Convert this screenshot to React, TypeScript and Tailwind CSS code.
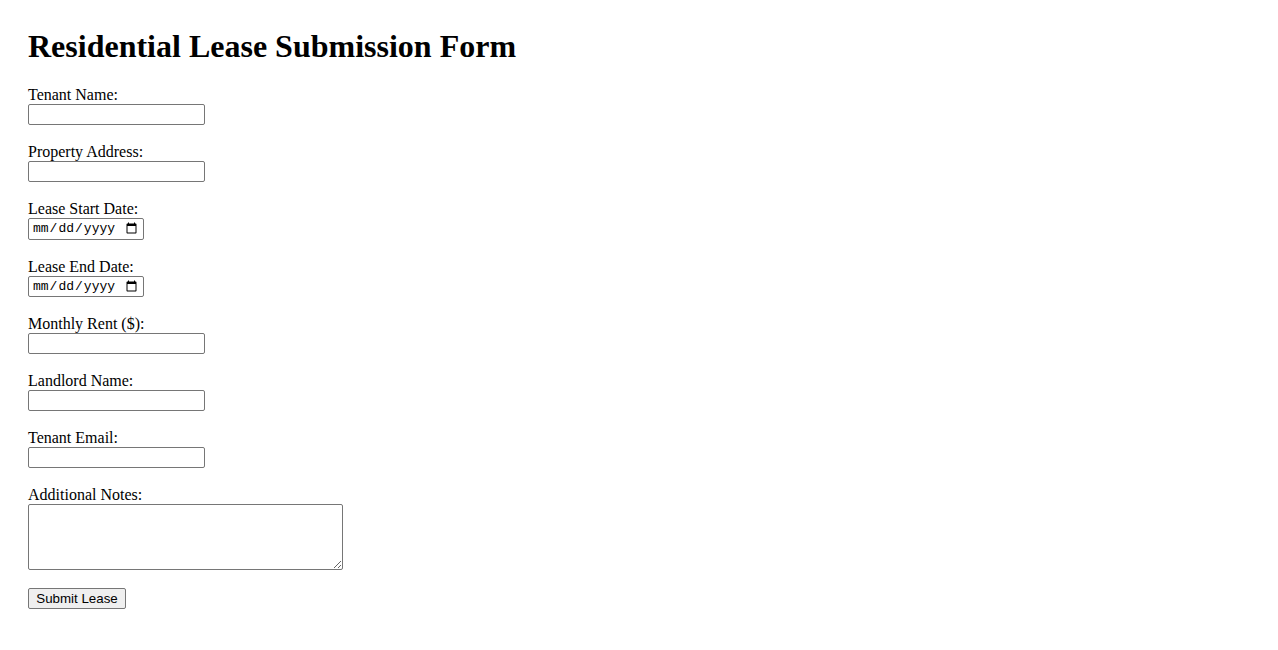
const fields = [
  { label: "Tenant Name:", type: "text" },
  { label: "Property Address:", type: "text" },
  { label: "Lease Start Date:", type: "date" },
  { label: "Lease End Date:", type: "date" },
  { label: "Monthly Rent ($):", type: "number" },
  { label: "Landlord Name:", type: "text" },
  { label: "Tenant Email:", type: "email" },
];

export default function App() {
  return (
    <div className="min-h-screen bg-white px-[28px] pt-[28px] text-black font-['Liberation_Serif',serif] text-[16px] leading-normal">
      <h1 className="text-[32px] font-bold leading-[37px] mb-[21px]">Residential Lease Submission Form</h1>
      <form className="flex flex-col items-start" onSubmit={(e) => e.preventDefault()}>
        {fields.map((f) => (
          <div key={f.label} className="flex flex-col items-start mb-[18px]">
            <label className="leading-[18px]">{f.label}</label>
            {f.type === "date" ? (
              <input
                type="date"
                className="w-[116px] h-[21.5px] border border-[#767676] rounded-[2px] bg-white px-[3px] text-[13px] font-['Liberation_Mono',monospace] text-black"
              />
            ) : (
              <input
                type={f.type === "number" ? "text" : f.type}
                className="w-[177px] h-[21px] border border-[#767676] rounded-[2px] bg-white px-[2px] text-[13.33px] font-['Liberation_Sans',sans-serif]"
              />
            )}
          </div>
        ))}
        <div className="flex flex-col items-start mb-[18px]">
          <label className="leading-[18px]">Additional Notes:</label>
          <textarea className="w-[315px] h-[66px] border border-[#767676] rounded-[2px] bg-white p-[2px] text-[13.33px] font-['Liberation_Mono',monospace]" />
        </div>
        <button
          type="submit"
          className="w-[98px] h-[21px] border border-[#767676] rounded-[2px] bg-[#efefef] text-[13.33px] leading-none font-['Liberation_Sans',sans-serif] text-black"
        >
          Submit Lease
        </button>
      </form>
    </div>
  );
}
